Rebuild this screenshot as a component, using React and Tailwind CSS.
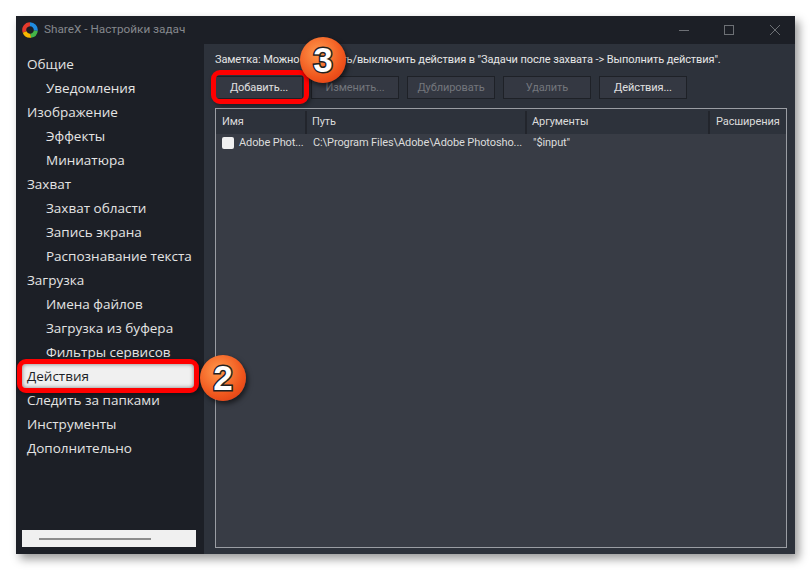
const navItems = [
  ['Общие', 0],
  ['Уведомления', 1],
  ['Изображение', 0],
  ['Эффекты', 1],
  ['Миниатюра', 1],
  ['Захват', 0],
  ['Захват области', 1],
  ['Запись экрана', 1],
  ['Распознавание текста', 1],
  ['Загрузка', 0],
  ['Имена файлов', 1],
  ['Загрузка из буфера', 1],
  ['Фильтры сервисов', 1],
  ['Действия', 0],
  ['Следить за папками', 0],
  ['Инструменты', 0],
  ['Дополнительно', 0],
];

const buttons = [
  ['Добавить...', true],
  ['Изменить...', false],
  ['Дублировать', false],
  ['Удалить', false],
  ['Действия...', true],
];

function Logo() {
  return (
    <svg width="16" height="16" viewBox="0 0 16 16" fill="none" strokeWidth="4">
      <path d="M8 2.2A5.8 5.8 0 0 0 2.6 10" stroke="#e53a2c" />
      <path d="M2.6 10a5.8 5.8 0 0 0 6.2 3.7" stroke="#f8b800" />
      <path d="M8.8 13.7A5.8 5.8 0 0 0 13.8 8.5" stroke="#43b548" />
      <path d="M13.8 8.5A5.8 5.8 0 0 0 8 2.2" stroke="#1f8be0" />
      <circle cx="8" cy="8" r="2.6" fill="#1c1f26" />
    </svg>
  );
}

function Badge({ n, className }) {
  return (
    <div className={`absolute w-[46px] h-[46px] rounded-full flex items-center justify-center bg-[radial-gradient(circle_at_40%_35%,#ff9a4d,#f0561d_60%,#d8330f)] shadow-[2px_3px_5px_rgba(0,0,0,0.55)] ${className}`}>
      <span className="text-[35px] font-bold text-white font-['Liberation_Sans',sans-serif] [-webkit-text-stroke:3px_#222] [paint-order:stroke_fill]">{n}</span>
    </div>
  );
}

export default function App() {
  return (
    <div className="w-[811px] h-[570px] bg-white p-4 overflow-hidden font-['Roboto',sans-serif]">
      <div className="relative w-[779px] h-[538px] flex flex-col bg-[#2d323b] shadow-[4px_5px_9px_rgba(0,0,0,0.4)]">
        {/* title bar */}
        <div className="h-7 shrink-0 bg-[#1c1f26] flex items-center pl-[6px]">
          <Logo />
          <span className="ml-[6px] text-[11.75px] text-[#85888d]">ShareX - Настройки задач</span>
          <div className="ml-auto flex items-center text-[#6d7075]">
            <svg width="10" height="10" viewBox="0 0 10 10" className="mr-[35px]"><path d="M0 5.5h10" stroke="currentColor" /></svg>
            <svg width="10" height="10" viewBox="0 0 10 10" className="mr-[36px]"><rect x="0.5" y="0.5" width="9" height="9" fill="none" stroke="currentColor" /></svg>
            <svg width="10" height="10" viewBox="0 0 10 10" className="mr-[15px]"><path d="M0 0l10 10M10 0L0 10" stroke="currentColor" /></svg>
          </div>
        </div>

        <div className="flex-1 flex min-h-0">
          {/* sidebar */}
          <div className="w-[188px] shrink-0 bg-[#1c1f26] flex flex-col pl-[6px] pr-2 pt-2 pb-[7px] font-['Open_Sans',sans-serif]">
            {navItems.map(([label, indent]) => {
              const active = label === 'Действия';
              return (
                <div
                  key={label}
                  className={`h-6 shrink-0 flex items-center pt-px whitespace-nowrap text-[13.5px] ${indent ? 'pl-6' : 'pl-[5px]'} ${active ? 'bg-[#f0f0f0] text-[#1c1f26]' : 'text-[#e4e4e4]'}`}
                >
                  {label}
                </div>
              );
            })}
            <div className="mt-auto h-[17px] bg-[#f0f0f0] flex items-center pl-[17px]">
              <div className="w-[112px] h-[2px] bg-[#8c8c8c]" />
            </div>
          </div>

          {/* main */}
          <div className="flex-1 min-w-0 flex flex-col pl-[11px] pr-2 pb-[6px] text-[11px] tracking-[-0.1px]">
            <p className="h-[32px] pt-2 text-[#e6e6e6] whitespace-nowrap">
              Заметка: Можно включить/выключить действия в "Задачи после захвата -&gt; Выполнить действия".
            </p>
            <div className="flex gap-2 mb-[9px]">
              {buttons.map(([label, enabled]) => (
                <div
                  key={label}
                  className={`w-[88px] h-[23px] flex items-center justify-center pt-[2px] border border-[#1e2127] bg-[#343842] ${enabled ? 'text-[#e0e0e0]' : 'text-[#73767c]'}`}
                >
                  {label}
                </div>
              ))}
            </div>
            <div className="flex-1 min-h-0 border border-[#9a9da3] bg-[#383c45] flex flex-col">
              <div className="h-[25px] shrink-0 bg-[#2d323b] flex pt-[2px] text-[#dcdcdc]">
                <div className="w-[91px] pl-[6px] flex items-center border-r-2 border-[#22252c]">Имя</div>
                <div className="w-[220px] pl-[5px] flex items-center border-r-2 border-[#22252c]">Путь</div>
                <div className="w-[183px] pl-[5px] flex items-center border-r-2 border-[#22252c]">Аргументы</div>
                <div className="flex-1 pl-[6px] flex items-center">Расширения</div>
              </div>
              <div className="h-[18px] flex items-center text-[#dcdcdc] whitespace-nowrap">
                <div className="w-[91px] pl-[6px] flex items-center">
                  <div className="w-3 h-3 rounded-[2px] bg-[#f0f0f0] mr-[5px] shrink-0" />
                  <span className="pt-px">Adobe Phot...</span>
                </div>
                <div className="w-[220px] pl-[6px] pt-px">C:\Program Files\Adobe\Adobe Photosho...</div>
                <div className="pl-[6px] pt-px">"$input"</div>
              </div>
            </div>
          </div>
        </div>

        {/* annotations */}
        <div className="absolute left-px top-[343px] w-[182px] h-[34px] rounded-[9px] border-[5px] border-[#f00] shadow-[inset_0_0_4px_rgba(0,0,0,0.5),2px_2px_4px_rgba(0,0,0,0.4)]" />
        <div className="absolute left-[195px] top-[54px] w-[98px] h-[34px] rounded-[9px] border-[5px] border-[#f00] shadow-[2px_2px_4px_rgba(0,0,0,0.4)]" />
        <Badge n="3" className="left-[284px] top-[21px]" />
        <Badge n="2" className="left-[184px] top-[339px]" />
      </div>
    </div>
  );
}
